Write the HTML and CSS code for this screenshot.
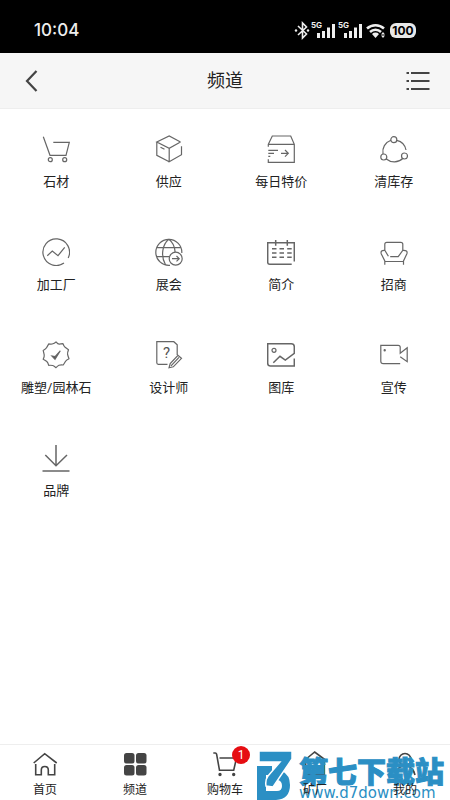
FILE: index.html
```
<!DOCTYPE html>
<html lang="zh-CN">
<head>
<meta charset="utf-8">
<meta name="viewport" content="width=device-width, initial-scale=1">
<title>频道</title>
<link rel="stylesheet" href="styles.css">
</head>
<body>
<div class="status">
  <span class="time">10:04</span>
  <span class="indicators">
    <svg width="94" height="20" viewBox="0 0 94 20" aria-hidden="true">
      <g fill="none" stroke="#eee" stroke-width="1.6">
        <path d="M4 6l8.500 8-4 4V3l4 4L4 15"/>
      </g>
      <g fill="#eee">
        <circle cx="2" cy="10.500" r="1.200"/><circle cx="14" cy="10.500" r="1.200"/>
        <text x="17" y="8" class="net">5G</text>
        <path d="M23 13h3v5h-3zM28 11h3v7h-3zM33 7.500h3V18h-3zM38 4h3v14h-3z"/>
        <text x="44" y="8" class="net">5G</text>
        <path d="M50 13h3v5h-3zM55 11h3v7h-3zM60 7.500h3V18h-3zM65 4h3v14h-3z"/>
        <path d="M78 14l3.500 4 3.500-4a5 5 0 0 0-7 0zM89 12l2 2.500h-4zM89 18l2-2.500h-4z"/>
      </g>
      <path d="M73 8.500a12.500 12.500 0 0 1 17 0M76 12a8 8 0 0 1 11 0" fill="none" stroke="#eee" stroke-width="2.500"/>
    </svg>
    <span class="battery">100</span>
  </span>
</div>

<header class="header">
  <button class="icon-button" aria-label="返回">
    <svg width="28" height="28" viewBox="0 0 28 28"><path d="M18.500 4L9 14l9.500 10" fill="none" stroke="#444" stroke-width="2.200"/></svg>
  </button>
  <h1>频道</h1>
  <button class="icon-button" aria-label="菜单">
    <svg width="28" height="28" viewBox="0 0 28 28"><path d="M2.500 6h2.500M7 6H25.500M2.500 14h2.500M7 14H25.500M2.500 22h2.500M7 22H25.500" stroke="#444" stroke-width="2"/></svg>
  </button>
</header>

<main class="channels">
  <a href="#" class="channel">
    <svg viewBox="0 0 28 28"><path d="M1.300 1.700L8 20.300h16l3.300-13h-16"/><circle cx="8.300" cy="24.700" r="2"/><circle cx="22.700" cy="24.700" r="2"/></svg>
    <span>石材</span>
  </a>
  <a href="#" class="channel">
    <svg viewBox="0 0 28 28"><path d="M25.500 7l-11.300 6.300L1.800 7l12.400-6 11.300 6M14.200 13.300v13.400l12.300-7v-8.400M14.200 26.700l-12.400-6.400V7M5.500 12.300l4 2"/></svg>
    <span>供应</span>
  </a>
  <a href="#" class="channel">
    <svg viewBox="0 0 28 28"><path d="M1.300 11.700V9.300L5.300 1h18.400l3.600 8.300v18h-26v-3M1.300 9.300h26M1.300 15.300h9.700M1.300 18.300H7M1.300 21.300h2M14 18.300h7.300M18 15l3.300 3.300L18 21.600"/></svg>
    <span>每日特价</span>
  </a>
  <a href="#" class="channel">
    <svg viewBox="0 0 28 28"><circle cx="13.800" cy="4.700" r="3"/><circle cx="3.800" cy="22" r="3"/><circle cx="24.500" cy="21" r="3"/><path d="M10.900 5.300A12 12 0 0 0 3 19M6.300 24a12.500 12.500 0 0 0 16.500-.500M16.800 5.300a12 12 0 0 1 9.200 9.700"/></svg>
    <span>清库存</span>
  </a>
  <a href="#" class="channel">
    <svg viewBox="0 0 28 28"><path d="M26.200 20a13.300 13.300 0 1 0-4.200 5M5.300 17.700l5-4.700 5.700 4.700 6.700-8.400"/></svg>
    <span>加工厂</span>
  </a>
  <a href="#" class="channel">
    <svg viewBox="0 0 28 28"><path d="M15 27.300A13 13 0 1 1 26.800 15M2 9.700h24M2 18.700h12M13.800 1.300C8 6 5 17 10.500 26.800M13.800 1.300c4 3 6 7.500 6.300 12.700"/><circle cx="20.700" cy="20.700" r="6.500"/><path d="M17 20.700h7M21.500 18l2.700 2.700-2.700 2.700"/></svg>
    <span>展会</span>
  </a>
  <a href="#" class="channel">
    <svg viewBox="0 0 28 28"><path d="M27.300 23.500V4.700H.700v19.600q0 2 2 2h22M8.700 2v5.700M20.300 2v5.700M5 10.700h4.500M12.500 10.700H17M20.200 10.700h4.500M5 15h4.500M12.500 15H17M20.200 15h4.500M5 19.300h4.500M12.500 19.300H17M20.200 19.300h4.500" class="bold"/></svg>
    <span>简介</span>
  </a>
  <a href="#" class="channel">
    <svg viewBox="0 0 28 28"><path d="M4.800 12.300v-6q0-2 2-2h14q2 0 2 2v6l-4.600 6.400h-8M4.800 12.300l3.600 6M4.800 12.300q-4.500-.300-3.600 3.400L4.800 23v3.700M22.800 12.300q5.200-.300 4.100 3.400L23.500 23v3.700M4.800 23.500h18.700"/></svg>
    <span>招商</span>
  </a>
  <a href="#" class="channel">
    <svg viewBox="0 0 28 28"><path stroke-linejoin="round" d="M14 .900Q16 3.300 17.300 3.200t3.700-.500q1 2.700 2.100 3.600t3.400 2.400q-1.200 3-.900 4.700t1.400 4.300q-2.900 1.500-3.600 2.800t-2.200 3.500q-3-.300-4.200.3T14 26.700q-2-1.900-3.200-2.200t-4.100-.2q-.800-2.900-1.900-3.800T1.200 18.200q1.300-2.800 1-4.300T1.200 9.400Q4 7.800 4.700 6.500t2.100-3.600q2.900.400 4.100-.1T14 .900z"/><path d="M10 15l3 3.200 5.300-8.400-5 5.700z" class="check"/></svg>
    <span>雕塑/园林石</span>
  </a>
  <a href="#" class="channel">
    <svg viewBox="0 0 28 28"><path d="M12.500 23.300H3.300q-1.500 0-1.500-1.500V.700h17l3.400 3V14M14 26.800l1.200-4.200L23 14.300l3.500 3-8.200 8.500zM16 24.800l8-8.400"/><text x="8" y="16.700" class="question">?</text></svg>
    <span>设计师</span>
  </a>
  <a href="#" class="channel">
    <svg viewBox="0 0 28 28"><path d="M6.300 21.700l6.700-6.400 5.300 3.700 9-6.700V5.700q0-3-3-3H.700v19.600q0 2.700 2.700 2.700h23.900v-7.500" class="bold"/><circle cx="7" cy="9.300" r="2"/></svg>
    <span>图库</span>
  </a>
  <a href="#" class="channel">
    <svg viewBox="0 0 28 28"><path d="M20.200 22.700H3.300q-2.500 0-2.500-2.500V4.300h17.400q2 0 2 2v6l7-5.600v14l-7-5"/><circle cx="4.700" cy="9.300" r=".600"/></svg>
    <span>宣传</span>
  </a>
  <a href="#" class="channel">
    <svg viewBox="0 0 28 28"><path d="M14 1v20.700M3.300 11L14 21.700 25 11M.500 27h27" class="bold"/></svg>
    <span>品牌</span>
  </a>
</main>

<nav class="tabs">
  <a href="#" class="tab">
    <svg viewBox="0 0 24 24"><path d="M.700 11l11-9.300 12 9.300M2.700 12v10.700h5.600V18q0-3.500 3.500-3.500t3.500 3.500v4.700h6.400V12"/></svg>
    <span>首页</span>
  </a>
  <a href="#" class="tab">
    <svg viewBox="0 0 24 24" class="solid"><rect x="1" y="1" width="10.500" height="10.500" rx="2.500"/><rect x="13" y="1" width="10.500" height="10.500" rx="2.500"/><rect x="1" y="13" width="10.500" height="10.500" rx="2.500"/><rect x="13" y="13" width="10.500" height="10.500" rx="2.500"/></svg>
    <span>频道</span>
  </a>
  <a href="#" class="tab">
    <svg viewBox="0 0 24 24"><path d="M.300 1h2q1 0 1.300 1.200L6.500 18.300h14.200L23.500 6h-17"/><circle cx="7" cy="22.500" r=".900"/><circle cx="20.700" cy="22.500" r=".900"/></svg>
    <span>购物车</span>
    <b class="badge">1</b>
  </a>
  <a href="#" class="tab">
    <svg viewBox="0 0 24 24"><path d="M.700 9l11-9 12 9M2.700 10v12.700h18.600V10"/></svg>
    <span>矿厂</span>
  </a>
  <a href="#" class="tab">
    <svg viewBox="0 0 24 24"><circle cx="12" cy="7.500" r="6"/><path d="M2 23q2-9 10-9t10 9"/></svg>
    <span>我的</span>
  </a>
</nav>

<div class="watermark">
  <svg width="37" height="49" viewBox="0 0 37 49" aria-hidden="true">
    <path d="M0 15h15v9H9v16h11q5 0 5-5t-4-6l4-9q8 4 8 14 0 14-14 15H0z" fill="#2b8fc4"/>
    <path d="M2 0h33v8L16 36l-7-1q-1-6 2-10l12-14H2z" fill="#2b8fc4" stroke="#fff" stroke-width="1.500"/>
  </svg>
  <div>
    <div class="site">第七下载站</div>
    <div class="url">www.d7down.com</div>
  </div>
</div>
</body>
</html>
```

FILE: styles.css
```
* { box-sizing: border-box; }

body {
  position: relative;
  display: flex;
  flex-direction: column;
  min-height: 100vh;
  margin: 0;
  background: #fff;
  color: #222;
  font-family: Roboto, "Noto Sans CJK SC", sans-serif;
  overflow-x: hidden;
}

a { color: inherit; text-decoration: none; }

.status {
  display: flex;
  align-items: center;
  justify-content: space-between;
  height: 53px;
  padding: 7px 34px 0;
  background: #000;
  color: #eee;
  font-family: Inter, sans-serif;
}
.time { font-size: 17px; font-weight: 500; }
.indicators { display: flex; align-items: center; gap: 2px; }
.net { font: 700 8px Inter, sans-serif; }
.battery {
  width: 26px;
  border-radius: 6px;
  background: #e8e8e8;
  color: #000;
  font-size: 12px;
  font-weight: 700;
  line-height: 15px;
  text-align: center;
}

.header {
  display: flex;
  align-items: center;
  justify-content: space-between;
  height: 56px;
  padding: 0 18px;
  border-bottom: 1px solid #eee;
  background: #f6f6f6;
}
.header h1 { margin: 0; font-size: 18px; font-weight: 400; line-height: 26px; }
.icon-button { display: flex; padding: 0; border: 0; background: none; }

.channels {
  flex: 1;
  display: grid;
  grid-template-columns: repeat(4, 1fr);
  align-content: start;
  row-gap: 47px;
  padding-top: 26px;
}
.channel {
  display: flex;
  flex-direction: column;
  align-items: center;
  gap: 10px;
  font-size: 13px;
  line-height: 18px;
}
.channel svg {
  width: 28px;
  height: 28px;
  fill: none;
  stroke: #666;
  stroke-width: 1.2;
}
.channel .bold { stroke-width: 1.5; }
.channel .check { fill: #555; }
.channel .question { fill: #555; stroke: none; font: 400 15px Roboto, sans-serif; }

.tabs {
  display: grid;
  grid-template-columns: repeat(5, 1fr);
  height: 56px;
  border-top: 1px solid #eee;
  background: #fff;
}
.tab {
  position: relative;
  display: flex;
  flex-direction: column;
  align-items: center;
  gap: 5px;
  padding-top: 7px;
  font-size: 12px;
  line-height: 18px;
}
.tab span { position: relative; z-index: 1; }
.tab svg {
  width: 24px;
  height: 24px;
  fill: none;
  stroke: #444;
  stroke-width: 1.6;
  overflow: visible;
}
.tab .solid { fill: #444; stroke: none; }
.badge {
  position: absolute;
  top: 1px;
  left: 50%;
  width: 18px;
  height: 18px;
  margin-left: 7px;
  border-radius: 50%;
  background: #e60d12;
  color: #fff;
  font-size: 12px;
  font-weight: 400;
  text-align: center;
}

.watermark {
  position: absolute;
  right: 6px;
  bottom: 0;
  display: flex;
  align-items: flex-end;
  gap: 5px;
  color: #2b8fc4;
  pointer-events: none;
}
.site {
  font-family: "Noto Sans CJK SC", sans-serif;
  font-size: 29px;
  font-weight: 900;
  line-height: 32px;
  -webkit-text-stroke: 1px #2b8fc4;
}
.url {
  font-family: "DejaVu Sans", sans-serif;
  font-size: 15px;
  line-height: 14px;
}
```
